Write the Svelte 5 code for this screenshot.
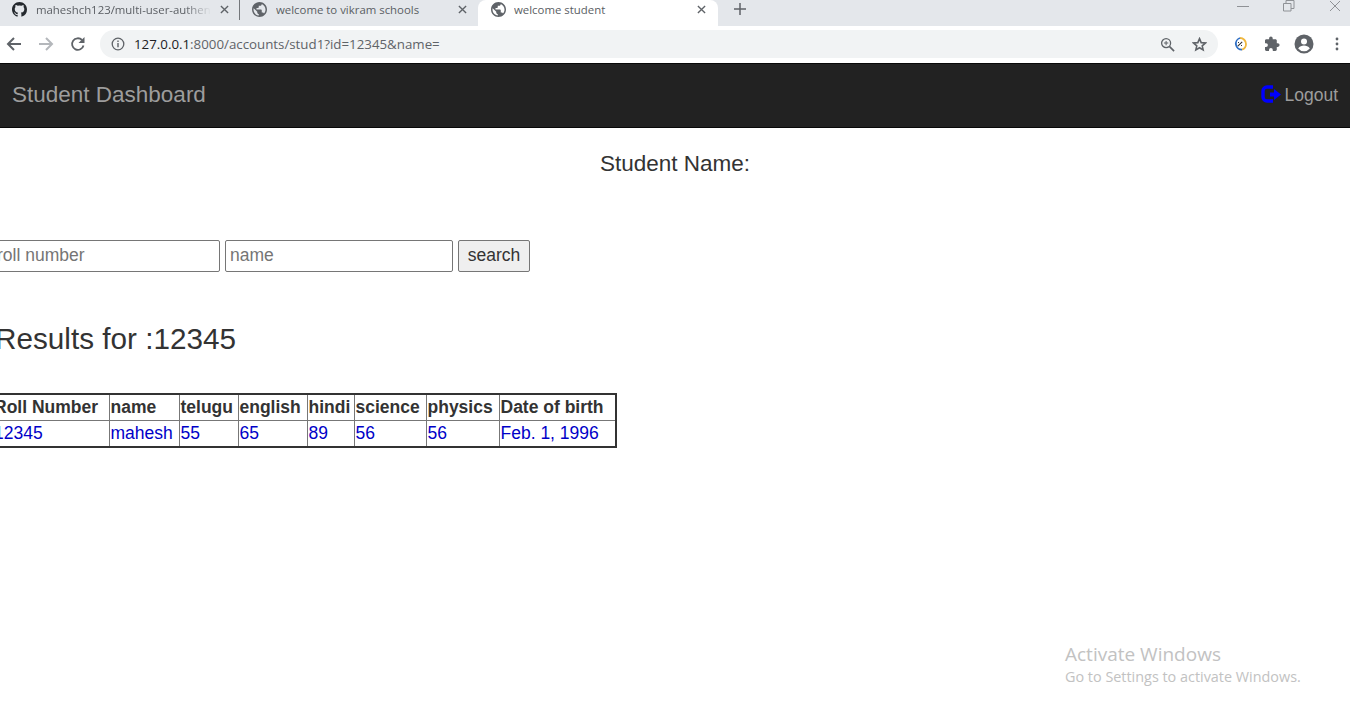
<script>
  const heads = ['Roll Number', 'name', 'telugu', 'english', 'hindi', 'science', 'physics', 'Date of birth'];
  const cells = ['12345', 'mahesh', '55', '65', '89', '56', '56', 'Feb. 1, 1996'];
  const widths = [113, 70, 59, 69, 47, 72, 73, 117];
</script>

{#snippet globe()}
  <svg class="fav" viewBox="2 2 20 20"><path fill="#5f6368" d="M12 2C6.480 2 2 6.480 2 12s4.480 10 10 10 10-4.480 10-10S17.520 2 12 2zm-1 17.930c-3.950-.49-7-3.850-7-7.930 0-.62.08-1.210.21-1.790L9 15v1c0 1.100.9 2 2 2v1.930zm6.900-2.540c-.26-.81-1-1.390-1.900-1.390h-1v-3c0-.55-.45-1-1-1H8v-2h2c.55 0 1-.45 1-1V7h2c1.100 0 2-.9 2-2v-.41c2.930 1.190 5 4.060 5 7.410 0 2.080-.8 3.970-2.100 5.390z"/></svg>
{/snippet}

{#snippet closeX()}
  <svg class="x" viewBox="0 0 10 10"><path d="M1 1l8 8M9 1l-8 8" stroke="#5f6368" stroke-width="1.500" fill="none"/></svg>
{/snippet}

<header class="chrome">
  <div class="strip">
    <div class="tab first">
      <svg class="fav" viewBox="0 0 16 16"><path fill="#24292e" d="M8 0C3.580 0 0 3.580 0 8c0 3.540 2.290 6.530 5.470 7.590.4.070.55-.17.55-.38 0-.19-.01-.82-.01-1.490-2.010.37-2.530-.49-2.690-.94-.09-.23-.48-.94-.82-1.130-.28-.15-.68-.52-.01-.53.63-.01 1.080.58 1.230.82.720 1.210 1.870.870 2.330.66.070-.52.280-.870.510-1.070-1.780-.2-3.640-.89-3.640-3.950 0-.87.31-1.590.82-2.150-.08-.2-.36-1.020.08-2.120 0 0 .67-.21 2.200.82a7.600 7.600 0 0 1 4 0c1.530-1.040 2.200-.82 2.200-.82.44 1.100.16 1.920.08 2.120.51.560.82 1.270.82 2.150 0 3.070-1.870 3.750-3.650 3.950.29.250.54.730.54 1.480 0 1.070-.01 1.930-.01 2.200 0 .21.150.46.550.38A8.010 8.010 0 0 0 16 8c0-4.420-3.580-8-8-8z"/></svg>
      <span class="title fade">maheshch123/multi-user-authen</span>
      {@render closeX()}
    </div>
    <div class="tab second">
      {@render globe()}
      <span class="title">welcome to vikram schools</span>
      {@render closeX()}
    </div>
    <div class="tab active">
      {@render globe()}
      <span class="title">welcome student</span>
      {@render closeX()}
    </div>
    <svg class="plus" viewBox="0 0 12 12"><path d="M6 0v12M0 6h12" stroke="#5f6368" stroke-width="1.500"/></svg>
    <div class="winctl">
      <svg width="12" height="12" viewBox="0 0 12 12"><path d="M0 6.500h12" stroke="#8f9296"/></svg>
      <svg width="12" height="12" viewBox="0 0 12 12"><path d="M.5 3.500h7.500v7.500H.5zM3 3.500V.5h8v8H8" stroke="#8f9296" fill="none"/></svg>
      <svg width="12" height="12" viewBox="0 0 12 12"><path d="M1 1l10 10M11 1L1 11" stroke="#8f9296" fill="none"/></svg>
    </div>
  </div>
  <div class="toolbar">
    <svg class="nav" viewBox="0 0 16 16"><path d="M15 8H2.500M8 2L2 8l6 6" stroke="#5f6368" stroke-width="2" fill="none"/></svg>
    <svg class="nav" viewBox="0 0 16 16"><path d="M15 8H2.500M8 2L2 8l6 6" stroke="#b4b7bb" stroke-width="2" fill="none" transform="rotate(180 8 8)"/></svg>
    <svg class="nav" viewBox="0 0 16 16"><path d="M13.500 9.500A5.800 5.800 0 1 1 12 4" stroke="#5f6368" stroke-width="1.800" fill="none"/><path d="M14.500 1v6h-6z" fill="#5f6368"/></svg>
    <div class="omni">
      <svg class="info" viewBox="0 0 14 14"><circle cx="7" cy="7" r="5.800" fill="none" stroke="#5f6368" stroke-width="1.300"/><path d="M7 6v4.200M7 3.600v1.300" stroke="#5f6368" stroke-width="1.400"/></svg>
      <span class="url"><b>127.0.0.1</b>:8000/accounts/stud1?id=12345&amp;name=</span>
      <svg class="zoom" viewBox="0 0 16 16"><circle cx="6.500" cy="6.500" r="4.800" fill="none" stroke="#5f6368" stroke-width="1.400"/><path d="M10 10l5 5" stroke="#5f6368" stroke-width="1.800"/><path d="M4.200 6.500h4.600M6.500 4.200v4.600" stroke="#5f6368" stroke-width="1.100"/></svg>
      <svg class="star" viewBox="0 0 16 16"><path d="M8 1.800l1.800 4.200 4.500.4-3.400 3 1 4.400L8 11.500l-3.900 2.300 1-4.400-3.400-3 4.500-.4z" fill="none" stroke="#5f6368" stroke-width="1.700"/></svg>
    </div>
    <svg class="ext" viewBox="0 0 14 14"><path d="M7 1a6 6 0 0 1 6 6 6 6 0 0 1-4 5.700" fill="none" stroke="#f0b73e" stroke-width="1.800"/><path d="M9 12.700A6 6 0 0 1 7 1" fill="none" stroke="#2f6fc4" stroke-width="1.800"/><path d="M4.800 9.200l4.400-4.400M5 5.500h1M8 8.500h1" stroke="#333" stroke-width="1.100"/></svg>
    <svg class="puzzle" viewBox="0 0 16 16"><path fill="#5f6368" d="M13.800 7.300h-1V4.600c0-.8-.6-1.400-1.400-1.400H8.700v-1a1.800 1.800 0 0 0-3.600 0v1H2.400C1.600 3.200 1 3.800 1 4.600v2.600h1a1.900 1.900 0 0 1 0 3.800H1v2.600c0 .8.600 1.400 1.400 1.400H5v-1a1.900 1.900 0 0 1 3.800 0v1h2.600c.8 0 1.400-.6 1.400-1.400v-2.700h1a1.800 1.800 0 0 0 0-3.600z"/></svg>
    <svg class="avatar" viewBox="0 0 20 20"><circle cx="10" cy="10" r="9.500" fill="#5f6368"/><circle cx="10" cy="7.500" r="3" fill="#fff"/><path d="M4.200 14.500c1.300-2.200 3.700-3 5.800-3s4.500.8 5.800 3a7.500 7.500 0 0 1-11.600 0z" fill="#fff"/></svg>
    <svg class="dots" viewBox="0 0 4 14"><circle cx="2" cy="2" r="1.400" fill="#5f6368"/><circle cx="2" cy="7" r="1.400" fill="#5f6368"/><circle cx="2" cy="12" r="1.400" fill="#5f6368"/></svg>
  </div>
</header>

<nav class="navbar">
  <span class="brand">Student Dashboard</span>
  <span class="logout">
    <svg class="logicon" viewBox="0 0 20 18"><path d="M12 2H6a4 4 0 0 0-4 4v6a4 4 0 0 0 4 4h6" fill="none" stroke="#0000ff" stroke-width="3.400"/><path d="M9 7.500h4V4l7 5.500-7 5.500v-3.500H9z" fill="#0000ff"/></svg>
    Logout
  </span>
</nav>

<main>
  <h3 class="student">Student Name:</h3>
  <div class="row">
    <form class="search">
      <input placeholder="roll number" />
      <input placeholder="name" />
      <button type="button">search</button>
    </form>
    <h2>Results for :12345</h2>
    <table>
      <colgroup>
        {#each widths as w}<col style="width:{w}px" />{/each}
      </colgroup>
      <thead>
        <tr>{#each heads as h}<th>{h}</th>{/each}</tr>
      </thead>
      <tbody>
        <tr>{#each cells as c}<td>{c}</td>{/each}</tr>
      </tbody>
    </table>
  </div>
</main>

<aside class="activate">
  <div class="a1">Activate Windows</div>
  <div class="a2">Go to Settings to activate Windows.</div>
</aside>

<style>
  :global(body) {
    margin: 0;
    background: #fff;
    font-family: "Liberation Sans", Arial, sans-serif;
    color: #333;
    overflow: hidden;
  }
  .chrome { height: 63px; background: #fff; }
  .strip {
    height: 26px;
    background: #e4e7eb;
    display: flex;
    align-items: flex-start;
    position: relative;
  }
  .tab {
    height: 26px;
    display: flex;
    align-items: center;
    box-sizing: border-box;
    font-family: "Open Sans", sans-serif;
    font-size: 11.400px;
    color: #5a5e63;
    padding-bottom: 8px;
  }
  .tab.first { width: 240px; padding-left: 12px; padding-right: 11px; position: relative; }
  .tab.first::after {
    content: "";
    position: absolute;
    right: 0;
    top: 0;
    width: 1px;
    height: 20px;
    background: #74777b;
  }
  .tab.first .x { margin-left: auto; }
  .tab.second { width: 238px; padding-left: 12px; padding-right: 11px; }
  .tab.active {
    width: 240px;
    background: #fff;
    border-radius: 8px 8px 0 0;
    padding-left: 13px;
    padding-right: 12px;
  }
  .tab.active .title { margin-left: 8px; }
  .fav { width: 15px; height: 15px; flex: none; }
  .title {
    margin-left: 9px;
    flex: 1;
    overflow: hidden;
    white-space: nowrap;
  }
  .fade {
    flex: none;
    width: 175px;
    -webkit-mask-image: linear-gradient(to right, #000 85%, transparent 100%);
    mask-image: linear-gradient(to right, #000 85%, transparent 100%);
  }
  .x { width: 9px; height: 9px; flex: none; }
  .plus { width: 12px; height: 12px; margin: 3px 0 0 16px; flex: none; }
  .winctl {
    margin-left: auto;
    display: flex;
    gap: 34px;
    padding: 0 9px 0 0;
  }
  .toolbar {
    height: 36px;
    display: flex;
    align-items: center;
    padding-left: 6px;
    box-sizing: border-box;
  }
  .nav { width: 16px; height: 16px; margin-right: 16px; flex: none; }
  .nav:nth-child(3) { margin-right: 14px; }
  .omni {
    width: 1118px;
    height: 28px;
    box-sizing: border-box;
    background: #f1f3f4;
    border-radius: 14px;
    display: flex;
    align-items: center;
    padding: 0 10px 0 11px;
    font-family: "Open Sans", sans-serif;
    font-size: 13.300px;
    color: #5f6368;
  }
  .info { width: 14px; height: 14px; flex: none; }
  .url { margin-left: 9px; flex: 1; white-space: nowrap; }
  .url b { font-weight: 400; color: #202124; }
  .zoom { width: 15px; height: 15px; flex: none; margin-right: 18px; }
  .star { width: 15px; height: 15px; flex: none; transform: translateX(-1px); }
  .ext { width: 14px; height: 14px; margin-left: 15px; flex: none; }
  .puzzle { width: 16px; height: 16px; margin-left: 17px; flex: none; }
  .avatar { width: 20px; height: 20px; margin-left: 14px; flex: none; }
  .dots { width: 4px; height: 14px; margin-left: 21px; flex: none; }

  .navbar {
    height: 65px;
    box-sizing: border-box;
    background: #222;
    border-top: 1px solid #080808;
    border-bottom: 1px solid #080808;
    display: flex;
    align-items: center;
    justify-content: space-between;
    padding: 0 12px;
    color: #9d9d9d;
  }
  .brand { font-size: 22.500px; transform: translateY(-1px); }
  .logout { font-size: 17.500px; display: flex; align-items: center; gap: 3px; }
  .logicon { width: 20px; height: 18px; transform: translateY(-2px); }

  main { display: block; }
  .student {
    margin: 0;
    padding-top: 23px;
    height: 112px;
    box-sizing: border-box;
    text-align: center;
    font-size: 22.500px;
    font-weight: 400;
    line-height: 26px;
  }
  .row { margin-left: -8px; }
  .search { display: flex; align-items: center; gap: 5px; height: 32px; }
  input {
    width: 228px;
    height: 32px;
    box-sizing: border-box;
    padding: 0 4px 1px;
    border: 1px solid #767676;
    border-radius: 2px;
    font: 17.500px "Liberation Sans", Arial, sans-serif;
    color: #333;
    background: #fff;
  }
  input::placeholder { color: #757575; }
  button {
    height: 32px;
    width: 72px;
    box-sizing: border-box;
    border: 1px solid #767676;
    border-radius: 2px;
    background: #efefef;
    color: #333;
    font: 17.500px "Liberation Sans", Arial, sans-serif;
    padding: 0 0 2px;
  }
  h2 {
    margin: 50px 0 0 3px;
    font-size: 29.700px;
    font-weight: 400;
    line-height: 33px;
    color: #333;
  }
  table {
    margin: 38px 0 0 3px;
    border-collapse: collapse;
    table-layout: fixed;
    width: 621px;
    border: 2px solid #333;
    font-size: 17.500px;
  }
  th, td {
    border: 1px solid #777;
    padding: 0 0 0 1px;
    height: 26px;
    line-height: 24px;
    text-align: left;
    white-space: nowrap;
    overflow: hidden;
    box-sizing: border-box;
  }
  td { height: 27px; }
  th:first-child, td:first-child { text-indent: -4px; }
  th { font-weight: 700; color: #333; }
  td { color: #0000c8; }

  .activate {
    position: absolute;
    left: 1065px;
    top: 642px;
    font-family: "Open Sans", sans-serif;
    color: #c2c2c2;
  }
  .a1 { font-size: 19px; line-height: 25px; }
  .a2 { font-size: 14.400px; line-height: 20px; }
</style>
